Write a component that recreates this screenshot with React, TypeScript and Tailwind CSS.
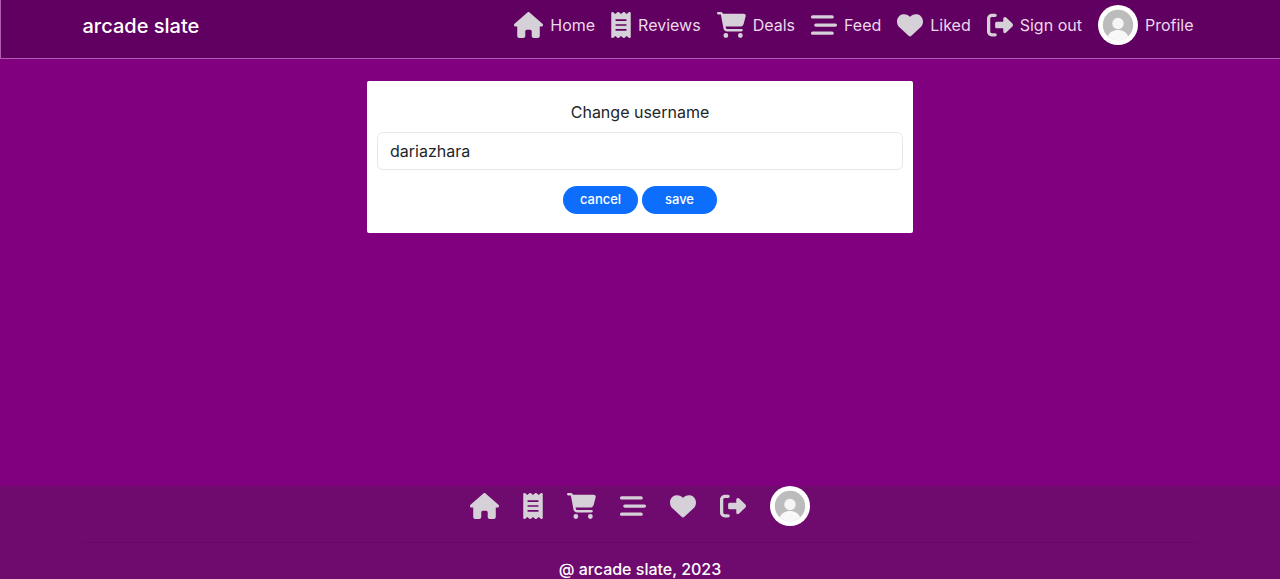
import { useState } from "react";
import type { IconType } from "react-icons";
import {
  FaBarsStaggered,
  FaCartShopping,
  FaHeart,
  FaHouse,
  FaReceipt,
  FaRightFromBracket,
} from "react-icons/fa6";

type NavItem = { label: string; href: string; Icon: IconType; size: string };

const navItems: NavItem[] = [
  { label: "Home", href: "#home", Icon: FaHouse, size: "h-[26px] w-[29px]" },
  { label: "Reviews", href: "#reviews", Icon: FaReceipt, size: "h-[26px] w-5" },
  { label: "Deals", href: "#deals", Icon: FaCartShopping, size: "h-[26px] w-[29px]" },
  { label: "Feed", href: "#feed", Icon: FaBarsStaggered, size: "h-[26px] w-[26px]" },
  { label: "Liked", href: "#liked", Icon: FaHeart, size: "h-[26px] w-[26px]" },
  { label: "Sign out", href: "#signout", Icon: FaRightFromBracket, size: "h-[26px] w-[26px]" },
];

function Avatar() {
  return (
    <svg viewBox="0 0 40 40" className="h-10 w-10 shrink-0" aria-hidden="true">
      <circle cx="20" cy="20" r="20" fill="#fff" />
      <circle cx="20" cy="20" r="15.2" fill="#bcbcbc" />
      <circle cx="20" cy="18.5" r="5.7" fill="#f5f5f5" />
      <path d="M9.8 31.3C11.2 27.4 15.2 25 20 25s8.800 2.400 10.200 6.300A15.200 15.200 0 0 1 20 35.200 15.200 15.200 0 0 1 9.800 31.300Z" fill="#f8f8f8" />
    </svg>
  );
}

function Header() {
  return (
    <header className="border-b border-l border-[#b25cb2] bg-[#600060]">
      <div className="mx-auto flex h-[58px] max-w-[1140px] items-start justify-between pt-[5px] pr-[17px] pl-3">
        <a href="#home" className="flex h-[42px] items-center text-xl font-medium text-white">
          arcade slate
        </a>
        <nav aria-label="Main" className="flex h-10 items-center gap-4 text-base text-[#ecd8ec]">
          {navItems.map(({ label, href, Icon, size }) => (
            <a key={label} href={href} className="flex items-center gap-[7px] whitespace-nowrap">
              <Icon className={`${size} shrink-0 text-[#d6d0d8]`} />
              {label}
            </a>
          ))}
          <a href="#profile" className="flex items-center gap-[7px]">
            <Avatar />
            Profile
          </a>
        </nav>
      </div>
    </header>
  );
}

function UsernameForm() {
  const [name, setName] = useState("dariazhara");
  return (
    <form
      onSubmit={(e) => e.preventDefault()}
      className="w-full max-w-[546px] rounded-xs bg-white px-[10px] pt-[19px] pb-[19px] text-[#212529]"
    >
      <label htmlFor="username" className="mb-2 block text-center text-base">
        Change username
      </label>
      <input
        id="username"
        value={name}
        onChange={(e) => setName(e.target.value)}
        className="h-[38px] w-full rounded-md border border-[#e6e8ea] px-3 text-base outline-none"
      />
      <div className="mt-4 flex justify-center gap-1 text-[13px] font-medium text-white">
        <button type="button" className="h-7 w-[75px] rounded-full bg-[#0d6efd]">
          cancel
        </button>
        <button type="submit" className="h-7 w-[75px] rounded-full bg-[#0d6efd]">
          save
        </button>
      </div>
    </form>
  );
}

function Footer() {
  return (
    <footer className="bg-[#6f0a6f]">
      <nav aria-label="Footer" className="flex h-10 items-center justify-center gap-6 text-[#d6d0d8]">
        {navItems.map(({ label, href, Icon, size }) => (
          <a key={label} href={href} aria-label={label}>
            <Icon className={size} />
          </a>
        ))}
        <a href="#profile" aria-label="Profile">
          <Avatar />
        </a>
      </nav>
      <hr className="mx-auto mt-4 max-w-[1116px] border-[#690669]" />
      <p className="pt-4 text-center text-base leading-5 font-medium text-white">@ arcade slate, 2023</p>
    </footer>
  );
}

export default function App() {
  return (
    <div className="flex min-h-screen flex-col bg-[#800080] font-['Inter','Liberation_Sans',sans-serif]">
      <Header />
      <main className="flex grow justify-center px-3 pt-[22px]">
        <div className="flex w-full items-start justify-center">
          <UsernameForm />
        </div>
      </main>
      <Footer />
    </div>
  );
}
